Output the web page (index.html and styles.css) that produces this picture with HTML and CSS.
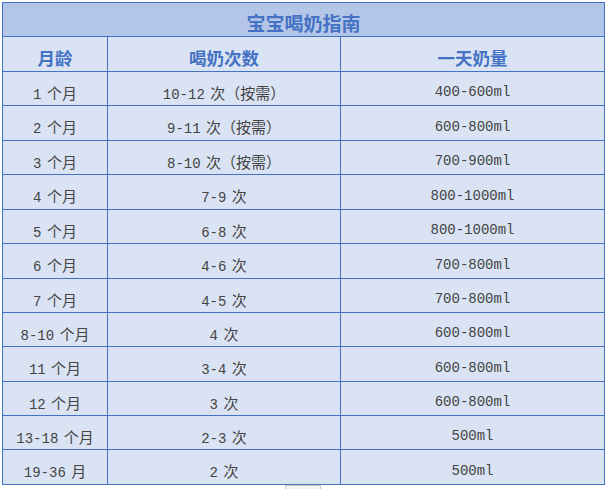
FILE: index.html
```html
<!DOCTYPE html>
<html lang="zh">
<head>
<meta charset="utf-8">
<link rel="stylesheet" href="styles.css">
</head>
<body>
<table class="guide">
  <colgroup>
    <col class="c1"><col class="c2"><col class="c3">
  </colgroup>
  <tr class="title"><th colspan="3">宝宝喝奶指南</th></tr>
  <tr class="head"><th>月龄</th><th>喝奶次数</th><th>一天奶量</th></tr>
  <tr class="r a"><td>1 <span class="zh">个月</span></td><td>10-12 <span class="zh">次（按需）</span></td><td>400-600ml</td></tr>
  <tr class="r b"><td>2 <span class="zh">个月</span></td><td>9-11 <span class="zh">次（按需）</span></td><td>600-800ml</td></tr>
  <tr class="r a"><td>3 <span class="zh">个月</span></td><td>8-10 <span class="zh">次（按需）</span></td><td>700-900ml</td></tr>
  <tr class="r b"><td>4 <span class="zh">个月</span></td><td>7-9 <span class="zh">次</span></td><td>800-1000ml</td></tr>
  <tr class="r a"><td>5 <span class="zh">个月</span></td><td>6-8 <span class="zh">次</span></td><td>800-1000ml</td></tr>
  <tr class="r b"><td>6 <span class="zh">个月</span></td><td>4-6 <span class="zh">次</span></td><td>700-800ml</td></tr>
  <tr class="r a"><td>7 <span class="zh">个月</span></td><td>4-5 <span class="zh">次</span></td><td>700-800ml</td></tr>
  <tr class="r a"><td>8-10 <span class="zh">个月</span></td><td>4 <span class="zh">次</span></td><td>600-800ml</td></tr>
  <tr class="r b"><td>11 <span class="zh">个月</span></td><td>3-4 <span class="zh">次</span></td><td>600-800ml</td></tr>
  <tr class="r a"><td>12 <span class="zh">个月</span></td><td>3 <span class="zh">次</span></td><td>600-800ml</td></tr>
  <tr class="r a"><td>13-18 <span class="zh">个月</span></td><td>2-3 <span class="zh">次</span></td><td>500ml</td></tr>
  <tr class="r b"><td>19-36 <span class="zh">月</span></td><td>2 <span class="zh">次</span></td><td>500ml</td></tr>
</table>
<div class="stub"></div>
</body>
</html>
```
FILE: styles.css
```css
html, body {
  margin: 0;
  padding: 0;
  background: #ffffff;
}
body {
  position: relative;
  width: 605px;
  height: 489px;
  overflow: hidden;
}
.guide {
  margin: 2px 0 0 2px;
  width: 602px;
  table-layout: fixed;
  border-collapse: collapse;
  font-family: "Liberation Mono", "Noto Sans CJK SC", monospace;
  font-size: 14px;
  color: #444444;
}
.c1 { width: 105px; }
.c2 { width: 233px; }
.c3 { width: 264px; }
.guide th, .guide td {
  border: 1px solid #4472c4;
  text-align: center;
  vertical-align: middle;
  padding: 7px 0 0 0;
  white-space: nowrap;
}
.guide td {
  word-spacing: -3px;
}
.zh {
  font-family: "Noto Sans CJK SC", sans-serif;
  font-size: 15px;
  word-spacing: 0;
}
.title th {
  height: 26px;
  background: #b4c6e7;
  color: #4472c4;
  font-family: "Noto Sans CJK SC", sans-serif;
  font-weight: 700;
  font-size: 19px;
  line-height: 22px;
}
.head th {
  height: 27px;
  background: #dae3f3;
  color: #4472c4;
  font-family: "Noto Sans CJK SC", sans-serif;
  font-weight: 700;
  font-size: 17.5px;
  line-height: 22px;
}
.r td {
  background: #dae3f3;
}
.r.a td { height: 26px; }
.r.b td { height: 27px; }
.stub {
  position: absolute;
  left: 285px;
  top: 485px;
  width: 34px;
  height: 10px;
  border: 1px solid #c8c8c8;
  background: #f4f4f4;
}
```
